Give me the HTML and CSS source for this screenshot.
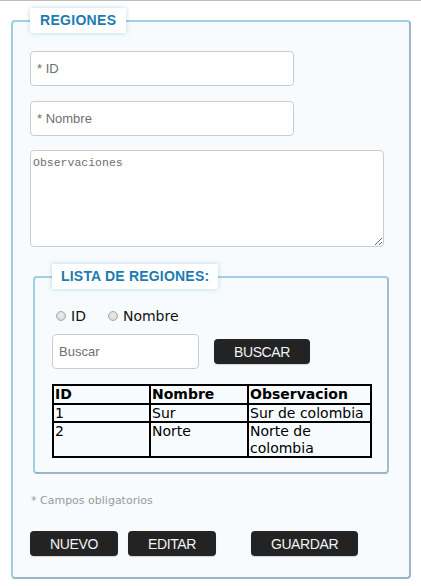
FILE: index.html
```html
<!DOCTYPE html>
<html lang="es">
<head>
<meta charset="utf-8">
<title>Regiones</title>
<link rel="stylesheet" href="styles.css">
</head>
<body>
<form class="page">
  <fieldset class="box outer">
    <legend class="legend">REGIONES</legend>
    <input class="field field-id" type="text" placeholder="* ID">
    <input class="field field-name" type="text" placeholder="* Nombre">
    <textarea class="notes" placeholder="Observaciones"></textarea>

    <fieldset class="box inner">
      <legend class="legend legend-list">LISTA DE REGIONES:</legend>
      <div class="radios">
        <label class="radio"><input type="radio" name="by"><span>ID</span></label>
        <label class="radio"><input type="radio" name="by"><span>Nombre</span></label>
      </div>
      <div class="search">
        <input class="field search-input" type="text" placeholder="Buscar">
        <button type="button" class="btn btn-search">BUSCAR</button>
      </div>
      <table class="grid">
        <colgroup>
          <col class="c1"><col class="c2"><col class="c3">
        </colgroup>
        <thead>
          <tr><th>ID</th><th>Nombre</th><th>Observacion</th></tr>
        </thead>
        <tbody>
          <tr><td>1</td><td>Sur</td><td>Sur de colombia</td></tr>
          <tr><td>2</td><td>Norte</td><td>Norte de colombia</td></tr>
        </tbody>
      </table>
    </fieldset>

    <p class="note">* Campos obligatorios</p>
    <div class="actions">
      <button type="button" class="btn btn-act">NUEVO</button>
      <button type="button" class="btn btn-act">EDITAR</button>
      <button type="button" class="btn btn-act btn-save">GUARDAR</button>
    </div>
  </fieldset>
</form>
</body>
</html>
```

FILE: styles.css
```css
html, body {
  margin: 0;
  padding: 0;
  background: #ffffff;
}
body {
  border-top: 1px solid #bdbdbd;
  font-family: "Liberation Sans", Arial, sans-serif;
}
.page {
  margin: 0;
  padding: 7px 0 0 11px;
}
.box {
  margin: 0;
  box-sizing: border-box;
  border: 2px solid;
  border-radius: 4px;
  min-width: 0;
}
.outer {
  width: 400px;
  padding: 18px 0 21px 17px;
  background: #f7fbfd;
  border-color: #9dd0e2 #9ab5c3 #9ab5c3 #9dd0e2;
}
.legend {
  padding: 4px 10px;
  line-height: 17px;
  font-size: 14px;
  font-weight: bold;
  letter-spacing: 0.3px;
  color: #1b7cb1;
  background: #ffffff;
  box-shadow: 0 0 5px rgba(70, 150, 200, 0.35);
}
.legend-list {
  padding: 4px 9px;
  letter-spacing: 0.2px;
}
.field {
  display: block;
  box-sizing: border-box;
  height: 35px;
  margin: 0;
  padding: 0 6px;
  border: 1px solid #cccccc;
  border-radius: 4px;
  background: #ffffff;
  font-family: "Liberation Sans", Arial, sans-serif;
  font-size: 13px;
  color: #333;
}
.field::placeholder {
  color: #6f6f6f;
}
.field-id {
  width: 264px;
  margin-bottom: 15px;
}
.field-name {
  width: 264px;
  margin-bottom: 14px;
}
.notes {
  display: block;
  box-sizing: border-box;
  width: 354px;
  height: 97px;
  margin: 0;
  padding: 5px 2px;
  border: 1px solid #cccccc;
  border-radius: 4px;
  background: #ffffff;
  font-family: "Liberation Mono", "DejaVu Sans Mono", monospace;
  font-size: 11.5px;
}
.notes::placeholder {
  color: #6f6f6f;
}
.inner {
  width: 356px;
  margin: 17px 0 0 3px;
  padding: 17px 0 14px 17px;
  border-color: #9dd0e2 #a6bcc8 #9ab5c3 #9dd0e2;
}
.radios {
  display: flex;
  align-items: center;
  gap: 22px;
  height: 20px;
  margin-left: 4px;
  font-family: "DejaVu Sans", Verdana, sans-serif;
  font-size: 14px;
  color: #111;
}
.radio {
  display: flex;
  align-items: center;
  gap: 5px;
}
.radio input {
  appearance: none;
  -webkit-appearance: none;
  width: 10px;
  height: 10px;
  margin: 0;
  border: 1px solid #a9a9a9;
  border-radius: 50%;
  background: radial-gradient(circle at 50% 40%, #ececec 0, #d2d2d2 100%);
}
.search {
  display: flex;
  align-items: center;
  gap: 15px;
  margin-top: 8px;
}
.search-input {
  width: 147px;
}
.btn {
  height: 25px;
  padding: 0;
  border: 0;
  border-radius: 4px;
  background: #232323;
  color: #f2f2f2;
  font-family: "Liberation Sans", Arial, sans-serif;
  font-size: 14px;
  letter-spacing: -0.4px;
  box-shadow: 0 1px 1px rgba(0, 0, 0, 0.15);
}
.btn-search {
  width: 96px;
}
.grid {
  margin-top: 15px;
  width: 318px;
  table-layout: fixed;
  border-collapse: collapse;
  border: 2px solid #000;
  font-family: "DejaVu Sans", Verdana, sans-serif;
  font-size: 14px;
  line-height: 16.5px;
  color: #000;
}
.c1 { width: 97px; }
.c2 { width: 98px; }
.c3 { width: 123px; }
.grid th, .grid td {
  border: 2px solid #000;
  padding: 0 1px;
  text-align: left;
  vertical-align: top;
}
.grid th {
  font-weight: bold;
}
.note {
  margin: 20px 0 0 1px;
  font-family: "DejaVu Sans", Verdana, sans-serif;
  font-size: 11px;
  line-height: 13px;
  color: #9a9a9a;
}
.actions {
  display: flex;
  margin-top: 24px;
}
.btn-act {
  width: 88px;
  margin-right: 10px;
}
.btn-save {
  width: 107px;
  margin-left: 25px;
}
```
